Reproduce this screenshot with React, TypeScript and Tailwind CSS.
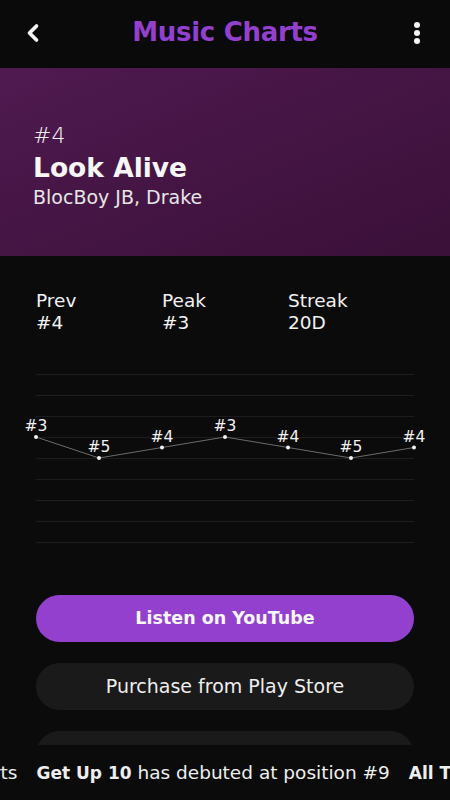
import { ChevronLeft } from 'lucide-react';

const history = [3, 5, 4, 3, 4, 5, 4];

const Chart = () => {
    // 9 horizontal guide lines, 21px apart
    const lines = Array.from({ length: 9 }, (_, i) => 15 + i * 21);
    const xs = history.map((_, i) => 36 + i * 63);
    const ys = history.map((r) => 78 + (r - 3) * 10.5);
    return (
        <svg width="450" height="200" className="block">
            {lines.map((y) => (
                <line key={y} x1="36" x2="414" y1={y + 0.5} y2={y + 0.5} stroke="#1c1c1c" strokeWidth="1" />
            ))}
            <polyline
                points={xs.map((x, i) => `${x},${ys[i]}`).join(' ')}
                fill="none"
                stroke="#6b6b6b"
                strokeWidth="1"
            />
            {xs.map((x, i) => (
                <g key={i}>
                    <circle cx={x} cy={ys[i]} r="2" fill="#f2f2f2" />
                    <text
                        x={x}
                        y={ys[i] - 6}
                        textAnchor="middle"
                        fill="#f2f2f2"
                        fontSize="15.5"
                        fontFamily="'DejaVu Sans', sans-serif"
                    >
                        #{history[i]}
                    </text>
                </g>
            ))}
        </svg>
    );
};

const Stat = ({ label, value }: { label: string; value: string }) => (
    <div className="w-[126px] leading-[22px] text-[18.5px] text-[#f2f2f2]">
        <div>{label}</div>
        <div>{value}</div>
    </div>
);

export default function App() {
    return (
        <div
            className="w-[450px] h-[800px] flex flex-col overflow-hidden bg-[#0b0b0b] text-white"
            style={{ fontFamily: "'DejaVu Sans', sans-serif" }}
        >
            {/* Top bar */}
            <div className="h-[68px] shrink-0 bg-[#0a0a0a] flex items-center justify-between px-[19px] pb-[3px]">
                <ChevronLeft size={28} strokeWidth={3.2} color="#f5f5f5" />
                <h1 className="text-[26px] font-bold text-[#9440cf] tracking-[-0.3px]">Music Charts</h1>
                <div className="flex flex-col items-center gap-[2px] w-[28px]">
                    <span className="w-[6px] h-[6px] rounded-full bg-[#f5f5f5]"></span>
                    <span className="w-[6px] h-[6px] rounded-full bg-[#f5f5f5]"></span>
                    <span className="w-[6px] h-[6px] rounded-full bg-[#f5f5f5]"></span>
                </div>
            </div>

            <div className="flex-1 overflow-hidden">
                {/* Hero */}
                <div className="h-[188px] bg-gradient-to-br from-[#4f1a50] to-[#3a1038] px-[33px] pt-[53px]">
                    <div className="text-[22px] leading-[30px] font-light text-[#f2f2f2]">#4</div>
                    <div className="text-[26.5px] leading-[34px] font-bold text-[#f7f7f7]">Look Alive</div>
                    <div className="text-[19px] leading-[24px] text-[#e6e6e6]">BlocBoy JB, Drake</div>
                </div>

                {/* Stats */}
                <div className="flex px-[36px] pt-[34px]">
                    <Stat label="Prev" value="#4" />
                    <Stat label="Peak" value="#3" />
                    <Stat label="Streak" value="20D" />
                </div>

                <div className="mt-[25px]">
                    <Chart />
                </div>

                {/* Actions */}
                <div className="flex flex-col gap-[21px] px-[36px] mt-[36px]">
                    <button className="h-[47px] rounded-full bg-[#9440cf] text-[17.5px] font-bold text-[#f7f7f7]">
                        Listen on YouTube
                    </button>
                    <button className="h-[47px] rounded-full bg-[#1a1a1a] text-[19px] text-[#eeeeee]">
                        Purchase from Play Store
                    </button>
                    <button className="h-[47px] rounded-full bg-[#1a1a1a]" aria-label="More"></button>
                </div>
            </div>

            {/* News ticker */}
            <div className="h-[55px] shrink-0 bg-[#0b0b0b] flex items-center overflow-hidden whitespace-nowrap text-[18.5px] text-[#eeeeee]">
                <div className="flex gap-[19px] -ml-[43px]">
                    <span>Charts</span>
                    <span>
                        <b className="text-[17px]">Get Up 10</b> has debuted at position #9
                    </span>
                    <span>
                        <b className="text-[17px]">All Time</b> Charts
                    </span>
                </div>
            </div>
        </div>
    );
}
